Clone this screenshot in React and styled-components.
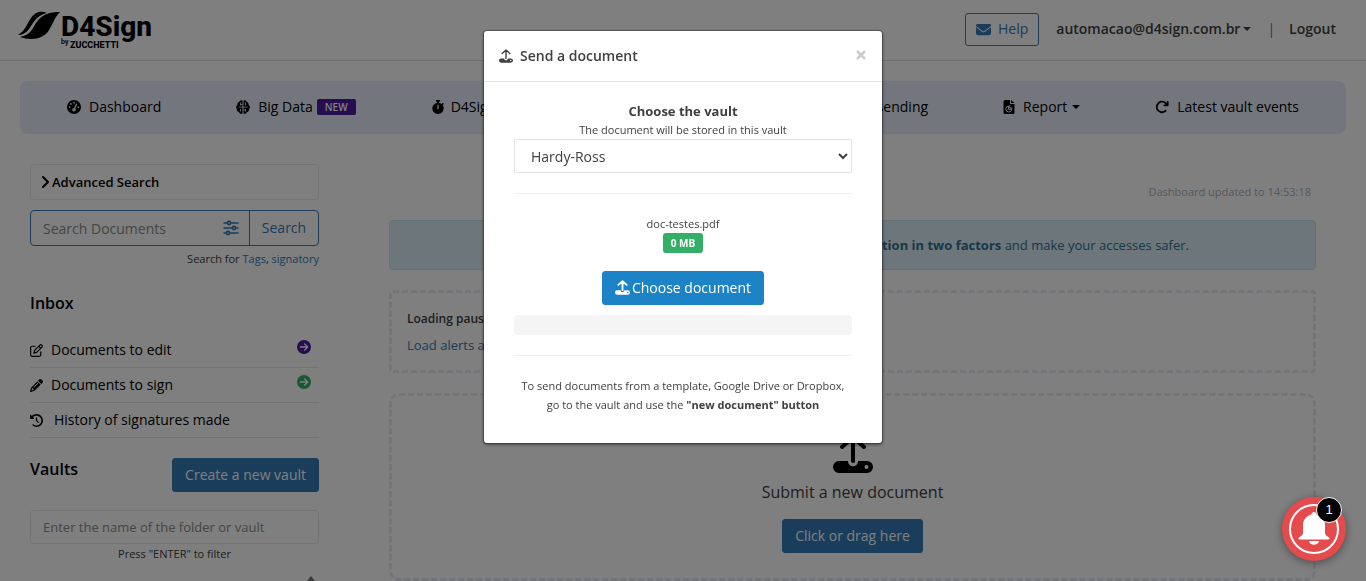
import React from "react";
import styled, { createGlobalStyle } from "styled-components";
import {
  FaEnvelope,
  FaGaugeHigh,
  FaStopwatch,
  FaArrowRotateRight,
  FaRegPenToSquare,
  FaPencil,
  FaClockRotateLeft,
  FaCircleArrowRight,
} from "react-icons/fa6";

const GlobalStyle = createGlobalStyle`
  *, *::before, *::after { box-sizing: border-box; }
  html, body { margin: 0; height: 100%; overflow: hidden; }
  body {
    background: #fff;
    color: #404040;
    font: 14px/20px "Open Sans", "Noto Sans", sans-serif;
  }
  a { color: #337ab7; text-decoration: none; }
  h2, h4, p, ul { margin: 0; padding: 0; }
  button, input, select { font: inherit; }
  svg { display: block; flex: none; }
`;

/* ---------- shared parts ---------- */

const Button = styled.button`
  display: inline-flex;
  align-items: center;
  justify-content: center;
  gap: 2px;
  height: 34px;
  padding: 0 12px;
  border: 1px solid ${(p) => p.$bg};
  border-radius: 3px;
  background: ${(p) => p.$bg};
  color: #fff;
  white-space: nowrap;
`;

const Caret = styled.span`
  width: 0;
  height: 0;
  border: 4px solid transparent;
  border-top-color: currentColor;
  border-bottom: 0;
`;

function UploadIcon({ size, bold }) {
  const w = bold ? 5 : 4;
  return (
    <svg width={size} height={size} viewBox="0 0 40 40" aria-hidden="true">
      <path
        d="M20 27V4M9 13L20 3l11 10"
        fill="none"
        stroke="currentColor"
        strokeWidth={w}
        strokeLinecap="round"
        strokeLinejoin="round"
      />
      <path
        fillRule="evenodd"
        fill="currentColor"
        d="M6 27h9c0 7 10 7 10 0h9a6 6 0 0 1 0 12H6a6 6 0 0 1 0-12zM33.500 31a2 2 0 1 0 0 4 2 2 0 0 0 0-4z"
      />
    </svg>
  );
}

function ReportIcon() {
  return (
    <svg width="12" height="14" viewBox="0 0 12 14" aria-hidden="true">
      <path d="M1.500 0H7v4h4.500v8.500A1.500 1.500 0 0 1 10 14H2a1.500 1.500 0 0 1-1.500-1.500v-11zM8 0l3.500 3H8z" fill="currentColor" />
      <path d="M5.500 6a3 3 0 1 0 3.300 3.300H5.500zM6.800 5.200v2.900h2.900" fill="none" stroke="#e6edf8" />
    </svg>
  );
}

function BrainIcon() {
  return (
    <svg width="14" height="14" viewBox="0 0 14 14" aria-hidden="true">
      <path
        fill="currentColor"
        d="M6.500 0.500C5 -.2 3.500.6 3.200 2 1.800 2.300 1.200 3.600 1.500 4.800.2 5.500-.3 7.500.7 8.800.5 10.500 1.500 11.800 3 12 3.500 13.800 5.300 14.300 6.500 13.500zM7.500.5C9-.2 10.500.6 10.800 2 12.200 2.300 12.800 3.600 12.500 4.800 13.800 5.500 14.300 7.500 13.300 8.800 13.500 10.500 12.500 11.800 11 12 10.500 13.800 8.700 14.300 7.500 13.500z"
      />
      <path
        fill="none"
        stroke="#e6edf8"
        strokeWidth=".8"
        d="M2.500 7.200h9M4.500 2.500v3M4.500 9v2.500M9.500 2.500v3M9.500 9v2.500M4.500 4.500h2M9.500 10h-2"
      />
    </svg>
  );
}

function ChevronIcon() {
  return (
    <svg width="9" height="14" viewBox="0 0 9 14" aria-hidden="true">
      <path d="M2 2l5 5-5 5" fill="none" stroke="currentColor" strokeWidth="2" strokeLinecap="round" strokeLinejoin="round" />
    </svg>
  );
}

/* ---------- header ---------- */

const Header = styled.header`
  display: flex;
  align-items: center;
  justify-content: space-between;
  height: 61px;
  padding: 0 30px 0 18px;
  border-bottom: 1px solid #dfe1e3;
  font-weight: 600;
`;

const Account = styled.div`
  display: flex;
  align-items: center;
  padding-bottom: 2px;
`;

const HelpLink = styled.a`
  display: flex;
  align-items: center;
  gap: 7px;
  height: 33px;
  margin-right: 17px;
  padding: 0 10px;
  border: 1px solid #337ab7;
  border-radius: 3px;
  font-weight: 400;
`;

const UserMenu = styled.button`
  display: flex;
  align-items: center;
  gap: 3px;
  padding: 0;
  border: 0;
  background: none;
  color: #404040;
  font-weight: 600;
`;

const Divider = styled.span`
  margin: 0 14px 0 15px;
  padding-left: 1px;
  color: #337ab7;
  font-weight: 400;
`;

const LogoutLink = styled.a`
  color: #404040;
`;

function Logo() {
  return (
    <svg width="138" height="44" viewBox="0 0 138 44" role="img" aria-label="D4Sign by Zucchetti">
      <path d="M0 27C8 22 8 17 13 10C18 3 24 3 29 5C17 8 15 16 11 21C8 25 4 27 0 27z" />
      <path d="M2 29C13 27 14 21 18 15C24 6 32 4 42 4C36 10 35 16 31 22C26 31 13 33 2 29z" />
      <text x="43" y="28" fontFamily="Roboto" fontWeight="800" fontSize="28">D4Sign</text>
      <text x="43" y="36" fontFamily="Roboto" fontSize="7">by</text>
      <text x="52" y="40" fontFamily="Roboto" fontWeight="800" fontSize="9">ZUCCHETTI</text>
    </svg>
  );
}

/* ---------- navigation ---------- */

const Nav = styled.nav`
  display: flex;
  align-items: center;
  justify-content: space-between;
  height: 53px;
  margin: 20px 20px 0;
  padding: 0 47px 2px;
  border-radius: 8px;
  background: #e6edf8;
`;

const NavGroup = styled.div`
  display: flex;
  align-items: center;
  gap: 75px;
`;

const NavItem = styled.a`
  display: flex;
  align-items: center;
  gap: ${(p) => p.$gap || "8px"};
  color: #000;
`;

const NewTag = styled.span`
  margin-left: -4px;
  padding: 0 8px;
  border-radius: 2px;
  background: #4a1a9e;
  color: #fff;
  font-size: 10px;
  font-weight: 600;
  line-height: 16px;
`;

const ReportLabel = styled.span`
  display: flex;
  align-items: center;
  gap: 5px;
`;

/* ---------- sidebar ---------- */

const Columns = styled.div`
  display: grid;
  grid-template-columns: 289px minmax(0, 1fr);
  gap: 41px;
  padding: 0 20px 0 30px;
`;

const Sidebar = styled.aside`
  padding-top: 30px;
`;

const AdvancedButton = styled.button`
  display: flex;
  align-items: center;
  gap: 2px;
  width: 100%;
  height: 36px;
  padding: 0 10px;
  border: 1px solid #ebebeb;
  border-radius: 4px;
  background: none;
  color: #000;
  font-size: 13px;
  font-weight: 600;
`;

const SearchBox = styled.form`
  display: flex;
  height: 36px;
  margin-top: 10px;
  border: 1px solid #337ab7;
  border-radius: 4px;
`;

const SearchInput = styled.input`
  flex: 1;
  min-width: 0;
  padding: 2px 12px 0;
  border: 0;
  background: none;
  outline: 0;
  &::placeholder { color: #8c8c8c; }
`;

const SearchAction = styled.button`
  display: flex;
  align-items: center;
  justify-content: center;
  width: ${(p) => p.$width};
  padding: 0;
  border: 0;
  border-left: ${(p) => (p.$divided ? "1px solid #337ab7" : "0")};
  background: none;
  color: #337ab7;
`;

const Hint = styled.p`
  font-size: 11px;
  line-height: 20px;
  text-align: ${(p) => p.$align};
  margin-top: ${(p) => p.$gap || "0"};
`;

const SideTitle = styled.h2`
  color: #000;
  font-size: 16px;
  font-weight: 600;
  line-height: 22px;
`;

const Inbox = styled.section`
  padding-top: 23px;
`;

const InboxList = styled.ul`
  margin-top: 19px;
  list-style: none;
`;

const InboxItem = styled.li`
  display: flex;
  justify-content: space-between;
  height: 35px;
  padding: 0 8px 0 0;
  border-bottom: 1px solid #e7e7e7;
  color: ${(p) => p.$color};
`;

const InboxLink = styled.a`
  display: flex;
  align-items: center;
  gap: ${(p) => p.$gap || "8px"};
  color: #000;
`;

const ArrowSlot = styled.span`
  padding-top: 7px;
`;

const VaultHead = styled.div`
  display: flex;
  justify-content: space-between;
  margin-top: 20px;
`;

const FolderInput = styled.input`
  display: block;
  width: 100%;
  height: 34px;
  margin-top: 18px;
  padding: 0 12px;
  border: 1px solid #e5e6e7;
  border-radius: 4px;
  background: none;
  font-size: 13px;
  &::placeholder { color: #8c8c8c; }
`;

const ScrollUp = styled.span`
  display: flex;
  justify-content: flex-end;
  margin-top: 12px;
  padding-right: 4px;
  color: #777;
`;

/* ---------- dashboard ---------- */

const Dashboard = styled.main`
  margin-top: 20px;
  padding: 28px 30px 0 29px;
  border-radius: 16px;
`;

const Updated = styled.p`
  padding-right: 5px;
  color: #a7b1c2;
  font-size: 11px;
  text-align: right;
`;

const SecurityAlert = styled.p`
  height: 50px;
  margin-top: 18px;
  padding: 0 126px 0 20px;
  border: 1px solid #bce8f1;
  border-radius: 4px;
  background: #d9edf7;
  color: #31708f;
  font-size: 13px;
  line-height: 48px;
  text-align: right;
`;

const DashedPanel = styled.section`
  margin-top: 20px;
  padding: ${(p) => p.$pad};
  border: 3px dashed #e4e8f0;
  border-radius: ${(p) => p.$radius};
  font-size: 13px;
`;

const AlertLine = styled.p`
  line-height: 26px;
  font-size: ${(p) => (p.$strong ? "12px" : "13px")};
  font-weight: ${(p) => (p.$strong ? 600 : 400)};
`;

const DropZone = styled.div`
  display: flex;
  flex-direction: column;
  align-items: center;
  gap: 7px;
  color: #000;
  ${Button} { margin-top: 9px; font-size: 14px; }
`;

const DropTitle = styled.p`
  color: #404040;
  font-size: 16px;
  line-height: 22px;
`;

/* ---------- modal ---------- */

const Backdrop = styled.div`
  position: fixed;
  inset: 0;
  z-index: 10;
  padding-top: 30px;
  background: rgba(0, 0, 0, 0.5);
`;

const Dialog = styled.section`
  width: 400px;
  max-width: 100%;
  margin: 0 auto;
  border: 1px solid rgba(0, 0, 0, 0.2);
  border-radius: 4px;
  background: #fff;
  background-clip: padding-box;
  box-shadow: 0 1px 3px rgba(0, 0, 0, 0.4);
`;

const DialogHead = styled.header`
  display: flex;
  align-items: center;
  gap: 7px;
  height: 51px;
  padding: 0 15px;
  border-bottom: 1px solid #e5e5e5;
`;

const DialogTitle = styled.h4`
  flex: 1;
  font-size: 14px;
  font-weight: 600;
`;

const CloseButton = styled.button`
  padding: 0 0 2px;
  border: 0;
  background: none;
  color: #ccc;
`;

const DialogBody = styled.div`
  padding: 19px 30px 29px;
  font-size: 11px;
  line-height: 19px;
  text-align: center;
`;

const VaultLabel = styled.label`
  display: block;
  font-size: 13px;
  font-weight: 700;
  line-height: 20px;
`;

const VaultNote = styled.p`
  line-height: 18px;
`;

const VaultSelect = styled.select`
  display: block;
  width: 100%;
  height: 34px;
  padding: 0 0 0 12px;
  border: 1px solid #e5e6e7;
  border-radius: 1px;
  background: #fff;
  color: #404040;
  font-size: 14px;
`;

const Rule = styled.hr`
  margin: 20px 0;
  border: 0;
  border-top: 1px solid #eee;
`;

const SizeTag = styled.span`
  display: table;
  margin: 0 auto 18px;
  padding: 0 8px;
  border-radius: 3px;
  background: #34af67;
  color: #fff;
  font-size: 10px;
  font-weight: 700;
  line-height: 20px;
`;

const ChooseButton = styled(Button)`
  font-size: 14px;
  padding-bottom: 1px;
`;

const Progress = styled.div`
  height: 20px;
  margin-top: 10px;
  border-radius: 4px;
  background: #f5f5f5;
`;

/* ---------- notification bell ---------- */

const Bell = styled.button`
  position: fixed;
  right: 20px;
  bottom: 20px;
  z-index: 20;
  width: 64px;
  height: 64px;
  padding: 0;
  border: 0;
  border-radius: 50%;
  background: #e54b4d;
  box-shadow: 0 2px 8px rgba(0, 0, 0, 0.4);
`;

const BellCount = styled.span`
  position: absolute;
  top: 0;
  right: 4px;
  width: 26px;
  height: 26px;
  border: 1px solid #fff;
  border-radius: 50%;
  background: #000;
  color: #fff;
  font: 13px/24px "Liberation Sans", Arial, sans-serif;
`;

export default function App() {
  return (
    <>
      <GlobalStyle />
      <Header>
        <Logo />
        <Account>
          <HelpLink href="#help">
            <FaEnvelope size={15} /> Help
          </HelpLink>
          <UserMenu type="button">
            automacao@d4sign.com.br <Caret />
          </UserMenu>
          <Divider>|</Divider>
          <LogoutLink href="#logout">Logout</LogoutLink>
        </Account>
      </Header>

      <Nav>
        <NavGroup>
          <NavItem href="#dashboard"><FaGaugeHigh size={14} /> Dashboard</NavItem>
          <NavItem href="#bigdata">
            <BrainIcon /> Big Data <NewTag>NEW</NewTag>
          </NavItem>
          <NavItem href="#d4sign" $gap="6px"><FaStopwatch size={14} /> D4Sign</NavItem>
        </NavGroup>
        <NavGroup>
          <NavItem href="#sending">sending</NavItem>
          <NavItem href="#report">
            <ReportIcon /> <ReportLabel>Report <Caret /></ReportLabel>
          </NavItem>
          <NavItem href="#events"><FaArrowRotateRight size={14} /> Latest vault events</NavItem>
        </NavGroup>
      </Nav>

      <Columns>
        <Sidebar>
          <AdvancedButton type="button"><ChevronIcon /> Advanced Search</AdvancedButton>
          <SearchBox>
            <SearchInput placeholder="Search Documents" aria-label="Search Documents" />
            <SearchAction type="button" $width="36px" aria-label="Filters">
              <svg width="16" height="16" viewBox="0 0 16 16" fill="none" stroke="currentColor" strokeWidth="1.600" strokeLinecap="round">
                <path d="M1 3h3M8 3h7M1 8h8M13 8h2M1 13h2M7 13h8" />
                <circle cx="6" cy="3" r="1.600" />
                <circle cx="11" cy="8" r="1.600" />
                <circle cx="5" cy="13" r="1.600" />
              </svg>
            </SearchAction>
            <SearchAction type="submit" $width="69px" $divided>Search</SearchAction>
          </SearchBox>
          <Hint $align="right" $gap="3px">
            Search for <a href="#tags">Tags</a>, <a href="#signatory">signatory</a>
          </Hint>

          <Inbox>
            <SideTitle>Inbox</SideTitle>
            <InboxList>
              <InboxItem $color="#4a1a9e">
                <InboxLink href="#edit"><FaRegPenToSquare size={13} /> Documents to edit</InboxLink>
                <ArrowSlot><FaCircleArrowRight size={14} /></ArrowSlot>
              </InboxItem>
              <InboxItem $color="#34af67">
                <InboxLink href="#sign"><FaPencil size={13} /> Documents to sign</InboxLink>
                <ArrowSlot><FaCircleArrowRight size={14} /></ArrowSlot>
              </InboxItem>
              <InboxItem>
                <InboxLink href="#history" $gap="11px"><FaClockRotateLeft size={13} /> History of signatures made</InboxLink>
              </InboxItem>
            </InboxList>
          </Inbox>

          <VaultHead>
            <SideTitle>Vaults</SideTitle>
            <Button type="button" $bg="#337ab7">Create a new vault</Button>
          </VaultHead>
          <FolderInput placeholder="Enter the name of the folder or vault" aria-label="Folder or vault name" />
          <Hint $align="center">Press "ENTER" to filter</Hint>
          <ScrollUp>
            <svg width="8" height="6" viewBox="0 0 8 6" aria-hidden="true">
              <path d="M4 0l4 5H0z" fill="currentColor" />
            </svg>
          </ScrollUp>
        </Sidebar>

        <Dashboard>
          <Updated>Dashboard updated to 14:53:18</Updated>
          <SecurityAlert>
            <strong>authentication in two factors</strong> and make your accesses safer.
          </SecurityAlert>
          <DashedPanel $pad="13px 15px 12px" $radius="4px">
            <AlertLine $strong>Loading paused</AlertLine>
            <AlertLine><a href="#alerts">Load alerts again</a></AlertLine>
          </DashedPanel>
          <DashedPanel $pad="38px 15px 25px" $radius="10px">
            <DropZone>
              <UploadIcon size={40} />
              <DropTitle>Submit a new document</DropTitle>
              <Button type="button" $bg="#337ab7">Click or drag here</Button>
            </DropZone>
          </DashedPanel>
        </Dashboard>
      </Columns>

      <Backdrop>
        <Dialog role="dialog" aria-modal="true" aria-labelledby="send-title">
          <DialogHead>
            <UploadIcon size={14} />
            <DialogTitle id="send-title">Send a document</DialogTitle>
            <CloseButton type="button" aria-label="Close">
              <svg width="12" height="12" viewBox="0 0 12 12" stroke="currentColor" strokeWidth="2.500">
                <path d="M2 2l8 8M10 2l-8 8" />
              </svg>
            </CloseButton>
          </DialogHead>
          <DialogBody>
            <VaultLabel htmlFor="vault">Choose the vault</VaultLabel>
            <VaultNote>The document will be stored in this vault</VaultNote>
            <VaultSelect id="vault" defaultValue="hardy">
              <option value="hardy">Hardy-Ross</option>
            </VaultSelect>
            <Rule />
            <p>doc-testes.pdf</p>
            <SizeTag>0 MB</SizeTag>
            <ChooseButton type="button" $bg="#1c84c6">
              <UploadIcon size={15} bold /> Choose document
            </ChooseButton>
            <Progress role="progressbar" aria-label="Upload progress" />
            <Rule />
            <p>
              To send documents from a template, Google Drive or Dropbox,
              <br />
              go to the vault and use the <strong>"new document" button</strong>
            </p>
          </DialogBody>
        </Dialog>
      </Backdrop>

      <Bell type="button" aria-label="Notifications">
        <svg width="64" height="64" viewBox="0 0 64 64" aria-hidden="true">
          <circle cx="32" cy="32" r="24" fill="none" stroke="#fff" strokeWidth="2" />
          <path
            fill="#fff"
            d="M32 15c1.500 0 2.500 1 2.500 2.500C40 19 43 23 43 28v8c0 2 2 3 4 4.500 1 1 .5 2-1 2H18c-1.500 0-2-1-1-2 2-1.500 4-2.500 4-4.500v-8c0-5 3-9 8.500-10.500C29.500 16 30.500 15 32 15zM27 44h10c-.5 5-9.500 5-10 0z"
          />
        </svg>
        <BellCount>1</BellCount>
      </Bell>
    </>
  );
}
